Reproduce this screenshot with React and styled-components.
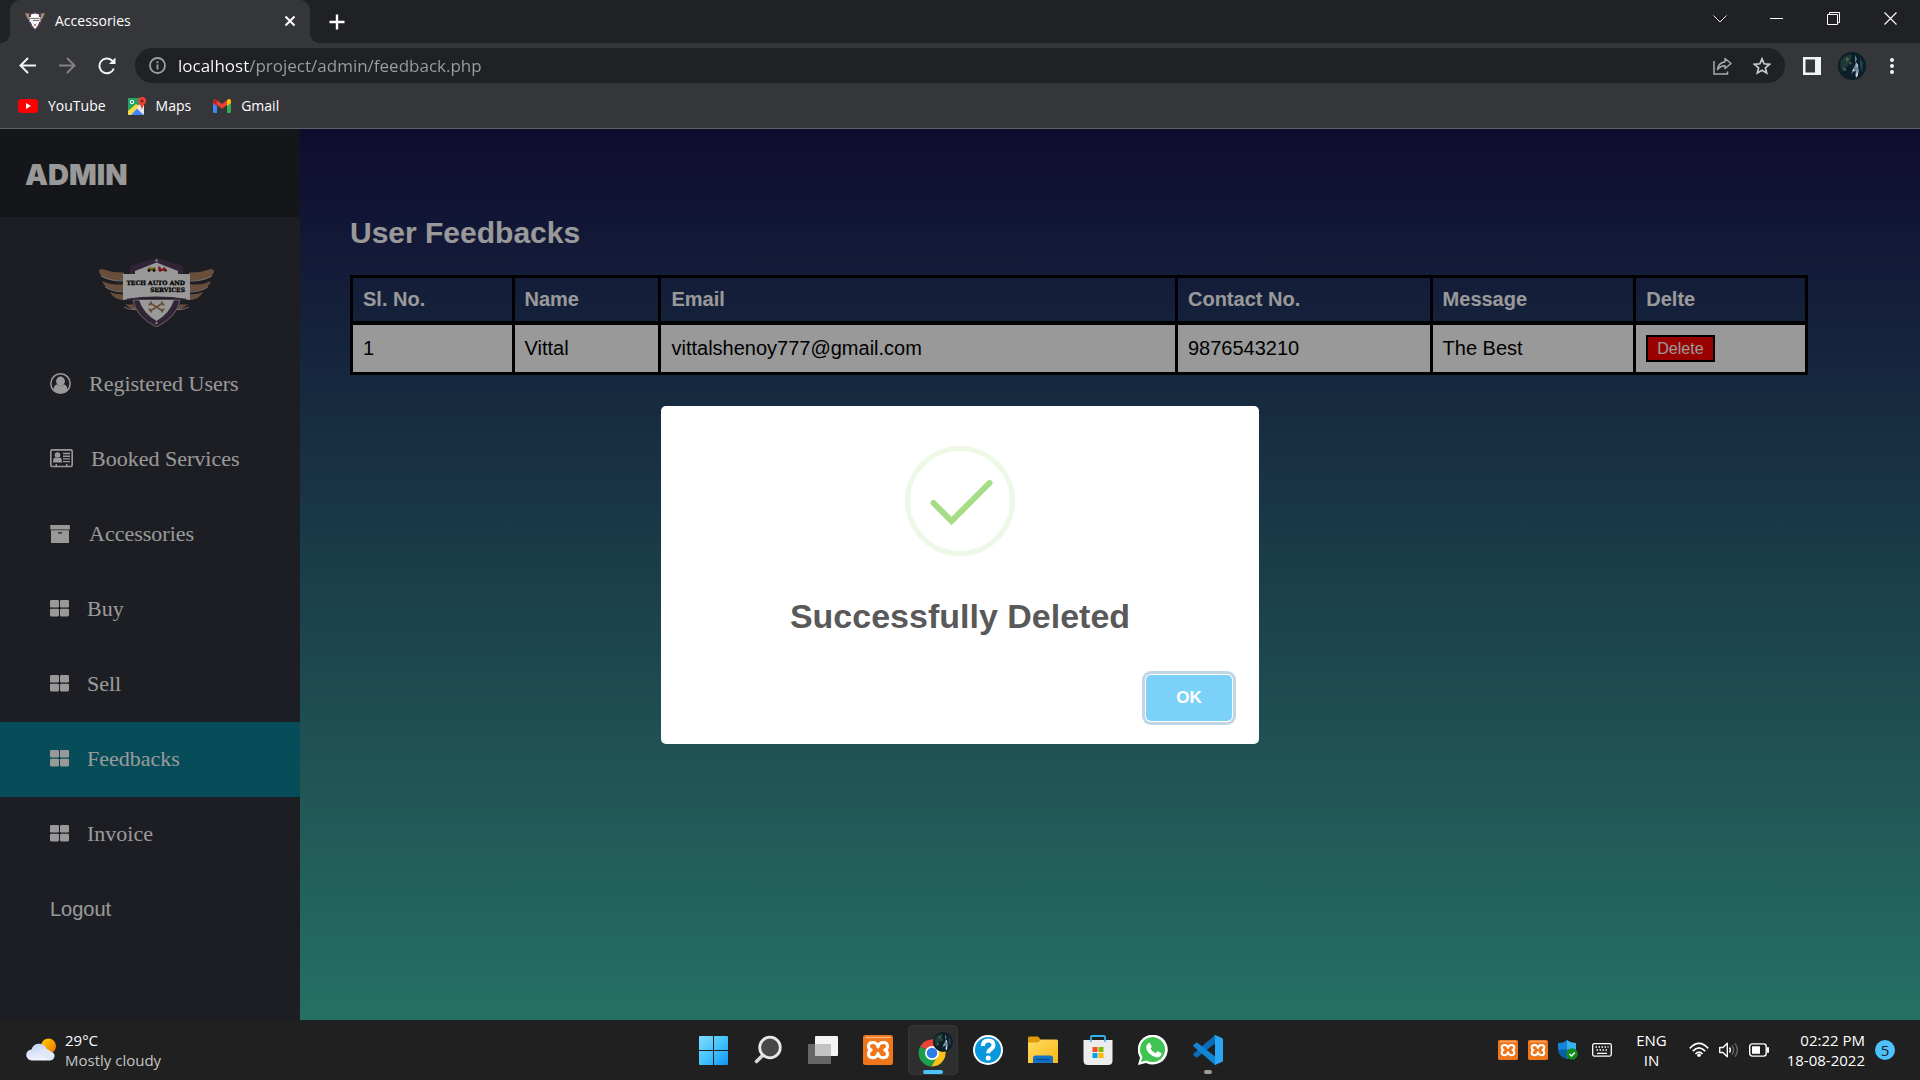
import React, { useState } from "react";
import styled, { createGlobalStyle } from "styled-components";

const GlobalStyle = createGlobalStyle`
  *, *::before, *::after { box-sizing: border-box; }
  body { margin: 0; background: #202020; }
  button { font: inherit; color: inherit; background: none; border: 0; padding: 0; cursor: pointer; }
  a { color: inherit; text-decoration: none; }
  ul { list-style: none; margin: 0; padding: 0; }
  svg { display: block; flex: none; }
`;

const uiFont = `"Segoe UI", "Open Sans", "Noto Sans", sans-serif`;
const pageFont = `"Liberation Sans", Arial, sans-serif`;

const Screen = styled.div`
  display: flex;
  flex-direction: column;
  min-height: 100vh;
`;

/* ---------- Browser ---------- */

const Browser = styled.header`
  background: #35363a;
  border-bottom: 1px solid #606165;
  color: #fff;
  font-family: ${uiFont};
  font-size: 14px;
  line-height: 20px;
`;

const TabStrip = styled.div`
  display: flex;
  align-items: stretch;
  height: 43px;
  padding-left: 10px;
  background: #202124;
`;

const Tab = styled.div`
  position: relative;
  display: flex;
  align-items: center;
  width: 300px;
  padding: 0 14px 2px 15px;
  border-radius: 10px 10px 0 0;
  background: #35363a;

  &::before,
  &::after {
    content: "";
    position: absolute;
    bottom: 0;
    width: 10px;
    height: 10px;
  }
  &::before {
    left: -10px;
    background: radial-gradient(circle at 0 0, #202124 10px, #35363a 10px);
  }
  &::after {
    right: -10px;
    background: radial-gradient(circle at 100% 0, #202124 10px, #35363a 10px);
  }
`;

const TabTitle = styled.span`
  flex: 1;
  margin-left: 10px;
`;

const NewTab = styled.button`
  display: grid;
  place-items: center;
  width: 34px;
  margin-left: 10px;
`;

const WindowControls = styled.div`
  display: flex;
  margin-left: auto;
  padding: 0 1px 6px 0;
`;

const WindowButton = styled.button`
  display: grid;
  place-items: center;
  width: 57px;
`;

const Toolbar = styled.div`
  display: flex;
  align-items: center;
  height: 44px;
  padding: 1px 8px 0 7px;
`;

const ToolButton = styled.button`
  display: grid;
  place-items: center;
  width: 40px;
  height: 34px;
`;

const AddressBar = styled.form`
  display: flex;
  flex: 1;
  align-items: center;
  height: 35px;
  margin: 0 7px 0 8px;
  padding: 0 3px 0 14px;
  border-radius: 18px;
  background: #202124;
`;

const AddressInput = styled.input`
  flex: 1;
  min-width: 0;
  margin-left: 12px;
  padding: 0;
  border: 0;
  outline: 0;
  color: #9aa0a6;
  background: linear-gradient(90deg, #ffffff 71px, #9aa0a6 71px);
  background-clip: text;
  -webkit-background-clip: text;
  -webkit-text-fill-color: transparent;
  font-family: ${uiFont};
  font-size: 17px;
  line-height: 24px;
`;

const Bookmarks = styled.nav`
  display: flex;
  align-items: center;
  gap: 22px;
  height: 41px;
  padding: 0 18px 3px;
`;

const Bookmark = styled.a`
  display: flex;
  align-items: center;
  gap: 10px;
`;

/* ---------- Site ---------- */

const Site = styled.div`
  position: relative;
  display: flex;
  flex: 1;
  font-family: ${pageFont};
  font-size: 20px;
  line-height: 23px;
  color: #fff;
  background: linear-gradient(#1b1451, #40bba6);
`;

const Sidebar = styled.aside`
  width: 300px;
  background: #30323b;
`;

const Brand = styled.div`
  display: flex;
  align-items: center;
  height: 88px;
  padding: 2px 25px 0;
  background: #23252a;
  font-family: "Arial Black", Inter, sans-serif;
  font-size: 29px;
  font-weight: 900;
`;

const LogoArea = styled.div`
  padding: 41px 0 20px 99px;
`;

const MenuLink = styled.a`
  display: flex;
  align-items: center;
  gap: 18px;
  height: 75px;
  padding: ${(p) => (p.$plain ? "0 50px" : "0 50px 2px")};
  background: ${(p) => (p.$active ? "#0b8095" : "transparent")};
  font-family: ${(p) => (p.$plain ? pageFont : `"Liberation Serif", "Times New Roman", serif`)};
  font-size: ${(p) => (p.$plain ? "20px" : "22px")};
`;

const Main = styled.main`
  flex: 1;
  padding-top: 87px;
`;

const Heading = styled.h1`
  margin: 0 50px 25px;
  font-size: 30px;
  line-height: 34px;
`;

const Table = styled.table`
  width: 90%;
  margin-left: 50px;
  table-layout: fixed;
  border-collapse: collapse;
  text-align: left;

  th,
  td {
    padding: 10px;
    border: 3px solid #000;
  }
  th {
    border-bottom-width: 4px;
  }
  td {
    background: #fff;
    color: #000;
  }
`;

const Column = styled.col`
  width: ${(p) => p.$share}%;
`;

const DeleteButton = styled.button`
  display: block;
  height: 27px;
  padding: 0 9px;
  border: 2px solid #000;
  background: #f00;
  color: #fff;
  font-size: 16px;
  line-height: 20px;
`;

/* ---------- Alert ---------- */

const Overlay = styled.div`
  position: absolute;
  inset: 0;
  display: grid;
  place-items: center;
  background: rgba(0, 0, 0, 0.4);
`;

const Alert = styled.section`
  display: flex;
  flex-direction: column;
  align-items: center;
  width: 598px;
  padding: 40px 27px 23px;
  border-radius: 5px;
  background: #fff;
`;

const AlertTitle = styled.h2`
  margin: 39px 0 38px;
  color: #595959;
  font-size: 34px;
  line-height: 42px;
`;

const AlertButton = styled.button`
  align-self: flex-end;
  width: 86px;
  height: 46px;
  border-radius: 5px;
  background: #7cd1f9;
  box-shadow: 0 0 0 1px #fff, 0 0 0 4px rgba(43, 114, 165, 0.29);
  color: #fff;
  font-size: 17px;
  font-weight: 700;
`;

/* ---------- Taskbar ---------- */

const Taskbar = styled.footer`
  display: grid;
  grid-template-columns: 1fr auto 1fr;
  align-items: center;
  height: 60px;
  padding: 0 25px 0 26px;
  background: #202020;
  color: #fff;
  font-family: ${uiFont};
  font-size: 15px;
  line-height: 20px;
`;

const Weather = styled.button`
  display: flex;
  align-items: center;
  justify-self: start;
  gap: 8px;
  text-align: left;
`;

const Lines = styled.span`
  display: flex;
  flex-direction: column;
  text-align: ${(p) => p.$align || "left"};
`;

const Muted = styled.span`
  color: #c4c4c4;
`;

const Apps = styled.div`
  display: flex;
  gap: 5px;
`;

const AppButton = styled.button`
  position: relative;
  display: grid;
  place-items: center;
  width: 50px;
  height: 50px;
  border-radius: 5px;
  background: ${(p) => (p.$current ? "#2e2e2e" : "transparent")};
  box-shadow: ${(p) => (p.$current ? "inset 0 0 0 1px #363636" : "none")};

  &::after {
    content: "";
    position: absolute;
    bottom: 1px;
    width: ${(p) => (p.$current ? "20px" : "8px")};
    height: 4px;
    border-radius: 2px;
    background: ${(p) => (p.$current ? "#4cc2ff" : p.$running ? "#9a9a9a" : "transparent")};
  }
`;

const Tray = styled.div`
  display: flex;
  align-items: center;
  justify-self: end;
  gap: 10px;
`;

const TrayGroup = styled.div`
  display: flex;
  align-items: center;
  gap: 10px;
  margin-left: ${(p) => p.$lead || "0"};
`;

const Badge = styled.span`
  display: grid;
  place-items: center;
  width: 20px;
  height: 20px;
  border-radius: 50%;
  background: #4cc2ff;
  color: #202020;
`;

/* ---------- Icons ---------- */

const Stroke = ({ w = 20, h = w, box, color = "#fff", width = 2, children, ...rest }) => (
  <svg width={w} height={h} viewBox={box || `0 0 ${w} ${h}`} fill="none" stroke={color} strokeWidth={width} {...rest}>
    {children}
  </svg>
);

const Favicon = () => (
  <svg width="20" height="20" viewBox="0 0 20 20">
    <path d="M0 2l6 1v6L4 9Q2 7 1.500 5.500zM20 2l-6 1v6l2 0q2-2 2.500-3.500z" fill="#b08a70" />
    <path d="M4 3l6-2 6 2v9q-2 5-6 7.500Q6 17 4 12z" fill="#54405c" />
    <path d="M6 3.500l4-1 4 1v8q-1 4-4 6.500-3-2.500-4-6.500z" fill="#fff" />
    <path d="M4.500 6h11v5h-11z" fill="#ececec" />
    <path d="M5.500 7.500h9M8 9.500h6.500" stroke="#777" />
    <path d="M8.500 12.500l3 3M11.500 12.500l-3 3" stroke="#b08a70" />
  </svg>
);

const Wing = () => (
  <g>
    <path d="M0 14Q0 11 3 11 14 15 25 14.500V22.500Q10 23 4 19 1 17 0 14z" />
    <path d="M3 23Q13 28 25 26V33.500Q12 33 7 29 4 26 3 23z" />
    <path d="M11 34Q18 37 25 36V42Q18 42 14 38 12 36 11 34z" />
    <path d="M26 46Q31 47 34 46L37 52Q31 51 26 46z" />
    <path d="M2 18Q12 23.500 25 23M6 29Q14 34 25 34M25 49Q30 52 37 51.500" fill="none" stroke="#e8ddd5" strokeWidth="0.8" />
  </g>
);

const Logo = () => (
  <svg width="115" height="69" viewBox="0 0 115 69" role="img" aria-label="Tech Auto and Services">
    <g fill="#ad8363">
      <Wing />
      <g transform="translate(115 0) scale(-1 1)"><Wing /></g>
    </g>
    <path d="M31 8L57.500 0 84 8v12H31z" fill="#503c5a" />
    <path d="M36 13L57.500 4.500 79 13v8H36z" fill="#fff" />
    <path d="M34 42h47q-3 17-23.500 27Q37 59 34 42z" fill="#503c5a" stroke="#cfc8d2" strokeWidth="0.8" />
    <path d="M40 42h35q-4 13-17.500 21Q44 55 40 42z" fill="#fff" />
    <circle cx="57.500" cy="2.500" r="1.200" fill="#d8d2da" />
    <circle cx="57.500" cy="65" r="1.200" fill="#d8d2da" />
    <path d="M48 13l2-4 3 1 3-1 1 4z" fill="#c9991c" />
    <circle cx="50" cy="12.500" r="1.400" fill="#222" />
    <circle cx="55" cy="12.500" r="1.400" fill="#222" />
    <path d="M59 8.500h2l1.500 2.500 3-2 3 4h-9z" fill="#d23b2e" />
    <circle cx="61" cy="12.500" r="1.200" fill="#922" />
    <circle cx="66.500" cy="12.500" r="1.200" fill="#922" />
    <path d="M24 16H91V42Q57.500 36 24 42z" fill="#fff" />
    <path d="M28 41.500Q57.500 37 87 41.500" fill="none" stroke="#503c5a" strokeWidth="1.500" />
    <g stroke="#ad8363" strokeWidth="2" fill="none">
      <path d="M52 45.500L63 52.500M63 45.500L52 52.500" />
      <path d="M49.500 46.500q3 .5 2.500-3M65.500 46.500q-3 .5-2.500-3M49.500 51.500q3-.5 2.500 3M65.500 51.500q-3-.5-2.500 3" />
    </g>
    <g fontFamily="'DejaVu Serif', serif" fontWeight="700" fontSize="6" textAnchor="end" fill="#000" stroke="#000" strokeWidth="0.3">
      <text x="86" y="27">TECH AUTO AND</text>
      <text x="86" y="34">SERVICES</text>
    </g>
  </svg>
);

const UserIcon = () => (
  <svg width="21" height="21" viewBox="0 0 21 21" fill="#fff">
    <circle cx="10.500" cy="10.500" r="9.700" fill="none" stroke="#fff" strokeWidth="1.500" />
    <ellipse cx="10.500" cy="8.300" rx="4.400" ry="4.700" />
    <path d="M3.500 17q.5-5.500 3.800-5.500 3.200 2.600 6.400 0 3.300 0 3.800 5.500-3 3.300-7 3.300T3.500 17z" />
  </svg>
);

const CardIcon = () => (
  <svg width="23" height="19" viewBox="0 0 23 19" fill="#fff">
    <rect x="0.800" y="0.900" width="21.400" height="16.600" rx="1.500" fill="none" stroke="#fff" strokeWidth="1.600" />
    <circle cx="7.500" cy="6" r="2.800" />
    <path d="M3 13.500q0-5 2.500-5 2 1.500 4 0 2.500 0 2.500 5z" />
    <path d="M13 4.500h7M13 7.200h7M13 9.900h7M13 12.600h7" stroke="#fff" strokeWidth="1.400" />
    <path d="M5.500 15h1.500v2H5.500zM16 15h1.500v2H16z" />
  </svg>
);

const ArchiveIcon = () => (
  <svg width="21" height="18" viewBox="0 0 21 18" fill="#fff">
    <rect x="0.300" width="19.600" height="4.500" rx="0.600" />
    <path fillRule="evenodd" d="M1 5.300h18V17.500q0 .5-.6.5H1.600Q1 18 1 17.500zM8 7.200v1.300h4.200V7.200z" />
  </svg>
);

const GridIcon = () => (
  <svg width="19" height="17" viewBox="0 0 19 17" fill="#fff">
    <rect width="9" height="7.600" rx="1.300" />
    <rect x="10" width="9" height="7.600" rx="1.300" />
    <rect y="8.800" width="9" height="7.600" rx="1.300" />
    <rect x="10" y="8.800" width="9" height="7.600" rx="1.300" />
  </svg>
);

const YouTubeIcon = () => (
  <svg width="20" height="14" viewBox="0 0 20 14">
    <rect width="20" height="14" rx="3.500" fill="#f00" />
    <path d="M8 4l5 3-5 3z" fill="#fff" />
  </svg>
);

const MapsIcon = () => (
  <svg width="18" height="18" viewBox="0 0 18 18">
    <rect y="1" width="16" height="17" rx="1.500" fill="#e8e8e8" />
    <path d="M0 14V2.500Q0 1 1.500 1H11L12 7 6 11z" fill="#1fa463" />
    <path d="M0 14L8 7l3 2-8.500 9H1.500Q0 18 0 16.500z" fill="#ffd83b" />
    <path d="M3 18l6-6.500 6.500 6.500z" fill="#4285f4" />
    <circle cx="4" cy="5" r="1.700" fill="none" stroke="#fff" strokeWidth="1.100" />
    <path d="M14 0a4 4 0 0 1 4 4c0 3-3.300 4-4 9-.7-5-4-6-4-9a4 4 0 0 1 4-4z" fill="#ea4335" />
    <circle cx="14" cy="4" r="1.400" fill="#7b1d15" />
  </svg>
);

const GmailIcon = () => (
  <svg width="18" height="14" viewBox="0 0 18 14">
    <path d="M0 3l4 3v8H1.200Q0 14 0 12.800z" fill="#4285f4" />
    <path d="M18 3l-4 3v8h2.800q1.200 0 1.200-1.200z" fill="#34a853" />
    <path d="M4 6V1.200L9 5l5-3.800V6L9 9.800z" fill="#ea4335" />
    <path d="M0 4V2Q0 0 1.800 0 2.400 0 4 1.200V7z" fill="#c5221f" />
    <path d="M18 4V2q0-2-1.800-2-.6 0-2.200 1.200V7z" fill="#fbbc04" />
  </svg>
);

const Avatar = ({ size }) => (
  <svg width={size} height={size} viewBox="0 0 28 28">
    <circle cx="14" cy="14" r="14" fill="#0c1e28" />
    <path d="M3 8q5-6 11-5l-3 9-6 8q-4-5-2-12z" fill="#1c3b38" />
    <path d="M8 5l4 2-4 3zM5 15l4 3-3 1zM11 9l3 2-2 2z" fill="#4d6049" />
    <path d="M17 3l2 4-2 4 3 3 1 5-2 6-2-1 1-5-3 1-2 3 2-6 2-4z" fill="#6e8598" />
    <path d="M18 10l2 3-1 3zM19 18l1 5-2 3zM14 19l2-2 0 2z" fill="#eef4fa" />
    <path d="M22 6l3 5-1 10-2-7z" fill="#1c4652" />
  </svg>
);

const WeatherIcon = () => (
  <svg width="31" height="24" viewBox="0 0 31 24">
    <defs>
      <linearGradient id="sun" x1="0" y1="0" x2="1" y2="1"><stop stopColor="#ffd000" /><stop offset="1" stopColor="#f07000" /></linearGradient>
      <linearGradient id="cloud" x1="0" y1="0" x2="0.300" y2="1"><stop stopColor="#bcd0f4" /><stop offset="1" stopColor="#eef3fc" /></linearGradient>
    </defs>
    <circle cx="22.500" cy="8" r="7.500" fill="url(#sun)" />
    <path d="M6 22.500a5.500 5.500 0 0 1-.5-11A8 8 0 0 1 20 9.500q1.500 1.500 1.500 3.500a5 5 0 0 1 2 9.500z" fill="url(#cloud)" />
    <path d="M13 15q4-5 8.500-3.500 2 .5 3 2 4.500 1 4 5-.8 4-5 4z" fill="#dfe8f8" />
  </svg>
);

const WindowsIcon = () => (
  <svg width="29" height="29" viewBox="0 0 29 29">
    <defs><linearGradient id="win" gradientUnits="userSpaceOnUse" x1="0" y1="0" x2="29" y2="29"><stop stopColor="#7fdcff" /><stop offset="0.500" stopColor="#45c4fb" /><stop offset="1" stopColor="#0f93f5" /></linearGradient></defs>
    <path d="M1 0h13v14H0V1q0-1 1-1zM15 0h13q1 0 1 1v13H15zM0 15h14v14H1q-1 0-1-1zM15 15h14v13q0 1-1 1H15z" fill="url(#win)" />
  </svg>
);

const SearchIcon = () => (
  <svg width="30" height="30" viewBox="0 0 30 30">
    <path d="M3.500 26.500l7-7" stroke="#d5d9dc" strokeWidth="3.500" strokeLinecap="round" />
    <circle cx="17" cy="12.500" r="10.300" fill="#484848" stroke="#e6e9eb" strokeWidth="2.800" />
  </svg>
);

const TaskViewIcon = () => (
  <svg width="30" height="28" viewBox="0 0 30 28">
    <rect x="7" width="23" height="20" rx="1" fill="#f4f4f4" />
    <rect y="8" width="23" height="20" rx="1" fill="#666" />
    <path d="M7 8h16v12H7z" fill="#c3c3c3" />
  </svg>
);

const XamppIcon = ({ size }) => (
  <svg width={size} height={size} viewBox="0 0 30 30">
    <rect width="30" height="30" rx="2.500" fill="#f0761c" />
    <path d="M3 2.500h24" stroke="#f8b27c" strokeWidth="1.500" strokeLinecap="round" />
    <path
      d="M15 12Q14 7.500 10 7.500 5.500 7.500 5.500 11.300 5.500 14 8.200 15 5.500 16 5.500 19 5.500 22.700 10 22.700 14 22.700 15 18.500 16 22.700 20 22.700 24.500 22.700 24.500 19 24.500 16 21.800 15 24.500 14 24.500 11.300 24.500 7.500 20 7.500 16 7.500 15 12z"
      fill="none"
      stroke="#fff"
      strokeWidth="3"
      strokeLinejoin="round"
    />
  </svg>
);

const ChromeIcon = () => (
  <svg width="40" height="38" viewBox="0 0 40 38">
    <path d="M19 22L7.300 15.300A13.500 13.500 0 0 1 30.700 15.300z" fill="#ea4335" />
    <path d="M19 22L7.300 15.300A13.500 13.500 0 0 0 18.500 35.500L25 25z" fill="#1e9e4a" />
    <path d="M19 22L30.700 15.300A13.500 13.500 0 0 1 18.500 35.500L24.500 25z" fill="#fcc21b" />
    <path d="M19 8.500A13.500 13.500 0 0 1 30.700 15.300H19z" fill="#ea4335" />
    <circle cx="19" cy="22" r="7" fill="#fff" />
    <circle cx="19" cy="22" r="5.300" fill="#2f7de9" />
    <g transform="translate(20 1) scale(0.714)"><Avatar size={28} /></g>
  </svg>
);

const HelpIcon = () => (
  <svg width="30" height="30" viewBox="0 0 30 30">
    <circle cx="15" cy="15" r="14" fill="#0797dc" stroke="#fff" strokeWidth="2" />
    <path d="M10 11q0-5.500 5.200-5.500T20.500 10q0 2.500-2.700 4.200-2.600 1.600-2.600 4" fill="none" stroke="#fff" strokeWidth="4" />
    <circle cx="15.200" cy="23" r="2.500" fill="#fff" />
  </svg>
);

const FolderIcon = () => (
  <svg width="30" height="28" viewBox="0 0 30 28">
    <defs><linearGradient id="folder" x1="0" y1="0" x2="1" y2="1"><stop stopColor="#ffdb63" /><stop offset="1" stopColor="#f9b816" /></linearGradient></defs>
    <path d="M0 2q0-1.500 1.500-1.500H10l3 3.500v8H0z" fill="#dd9b0b" />
    <path d="M0 6.500h10l3-3h15.500Q30 3.500 30 5v22H0z" fill="url(#folder)" />
    <path d="M5 27v-5q0-2.500 2.500-2.500h15q2.500 0 2.500 2.500v5z" fill="#1272c6" />
    <path d="M9 23.500h12" stroke="#0a4f93" strokeWidth="1.500" strokeLinecap="round" />
  </svg>
);

const StoreIcon = () => (
  <svg width="30" height="30" viewBox="0 0 30 30">
    <path d="M8 7V2q0-1 1-1h12q1 0 1 1v5" fill="none" stroke="#2cb3ee" strokeWidth="1.800" />
    <path d="M.5 5h29v20.500q0 4.500-4.500 4.500H5Q.5 30 .5 25.500z" fill="#ececec" />
    <path d="M9.500 12h5v5h-5z" fill="#f25022" /><path d="M15.500 12h5v5h-5z" fill="#7fba00" />
    <path d="M9.500 18h5v5h-5z" fill="#00a4ef" /><path d="M15.500 18h5v5h-5z" fill="#ffb900" />
    <path d="M8 5v2M22 5v2" stroke="#2cb3ee" strokeWidth="1.500" />
  </svg>
);

const WhatsAppIcon = () => (
  <svg width="30" height="30" viewBox="0 0 30 30">
    <path d="M0 30l2-7.500A15 15 0 1 1 8 28z" fill="#fff" />
    <path d="M3 27l1.500-5A12.500 12.500 0 1 1 8.500 25.500z" fill="#3fc351" />
    <path d="M10.500 8q.8-.5 1.500 0l1.700 3.400q.2.800-1.200 2.300 1.800 3.200 5 4.500l1.700-1.800q.5-.4 1.200 0l2.700 1.500q.5.400.2 1.500-1 3-4.500 3-4-.4-8-4.500-3-3.500-2.600-6 .3-2.500 2.300-3.900z" fill="#fff" />
  </svg>
);

const CodeIcon = () => (
  <svg width="30" height="30" viewBox="0 0 30 30">
    <path d="M22 0v8.500L4.500 22.300q-.8.500-1.500 0L.6 20.200q-.9-.9 0-1.700z" fill="#0b6cb5" />
    <path d="M.6 11.500q-.9-.9 0-1.700L3 7.700q.7-.5 1.500 0L22 21.500V30z" fill="#1285d4" />
    <path d="M21 .5q.6-.7 1.500-.3L29 3q1 .5 1 1.500v21q0 1-1 1.500l-6.500 2.800q-.9.400-1.500-.3 1 .5 1-1V1.500q0-1.500-1-1z" fill="#2aa5f5" />
  </svg>
);

const ShieldIcon = () => (
  <svg width="20" height="20" viewBox="0 0 20 20">
    <path d="M9 0Q12 3 18 3v6q0 7-9 10Q0 16 0 9V3q6 0 9-3z" fill="#1683d8" />
    <path d="M9 0Q12 3 18 3v6.500H9z" fill="#39b1ee" />
    <path d="M0 9.500h9V19Q1 16.500 0 9.500z" fill="#0b5fa8" />
    <circle cx="14" cy="14" r="5.800" fill="#128a1e" />
    <path d="M11.500 14l2 2 3.300-3.500" fill="none" stroke="#fff" strokeWidth="1.300" />
  </svg>
);

const KeyboardIcon = () => (
  <Stroke w={20} h={14} width={1.3}>
    <rect x="0.700" y="0.700" width="18.600" height="12.400" rx="1.500" />
    <path d="M3.500 4h1.500M6.500 4H8M9.500 4H11M12.500 4H14M15.500 4h1M4.500 7H6M7.500 7H9M10.500 7H12M13.500 7H15M5 10.300h10" />
  </Stroke>
);

const WifiIcon = () => (
  <Stroke w={20} h={16} width={1.7}>
    <path d="M.8 6.300Q10-3.500 19.200 6.300M3.800 9.200q6.200-6.500 12.400 0M6.500 12q3.500-3.600 7 0" />
    <circle cx="10" cy="13.300" r="1.800" fill="#fff" stroke="none" />
  </Stroke>
);

const SpeakerIcon = () => (
  <Stroke w={20} h={16} width={1.4}>
    <path d="M.7 5.500H4L8.300 1.300v13.400L4 10.500H.7z" strokeLinejoin="round" />
    <path d="M10.500 5.500q1.800 2.500 0 5" />
    <path d="M13 3.300q3.300 4.700 0 9.400M16 1.300q4.700 6.700 0 13.400" stroke="#666" />
  </Stroke>
);

const BatteryIcon = () => (
  <Stroke w={20} h={14} width={1.4}>
    <rect x="0.700" y="0.900" width="16.500" height="12.200" rx="2.500" />
    <rect x="3" y="3.200" width="8" height="7.600" rx="0.500" fill="#fff" stroke="none" />
    <path d="M19 5v4" strokeWidth="2" strokeLinecap="round" />
  </Stroke>
);

/* ---------- Data ---------- */

const menu = [
  { label: "Registered Users", Icon: UserIcon },
  { label: "Booked Services", Icon: CardIcon },
  { label: "Accessories", Icon: ArchiveIcon },
  { label: "Buy", Icon: GridIcon },
  { label: "Sell", Icon: GridIcon },
  { label: "Feedbacks", Icon: GridIcon, active: true },
  { label: "Invoice", Icon: GridIcon },
  { label: "Logout", plain: true },
];

const columns = [
  { title: "Sl. No.", share: 11.1 },
  { title: "Name", share: 10.1 },
  { title: "Email", share: 35.5 },
  { title: "Contact No.", share: 17.5 },
  { title: "Message", share: 14 },
  { title: "Delte", share: 11.8 },
];

const feedbacks = [
  { id: 1, name: "Vittal", email: "vittalshenoy777@gmail.com", contact: "9876543210", message: "The Best" },
];

const bookmarks = [
  { label: "YouTube", Icon: YouTubeIcon },
  { label: "Maps", Icon: MapsIcon },
  { label: "Gmail", Icon: GmailIcon },
];

const apps = [
  { label: "Start", icon: <WindowsIcon /> },
  { label: "Search", icon: <SearchIcon /> },
  { label: "Task view", icon: <TaskViewIcon /> },
  { label: "XAMPP", icon: <XamppIcon size={30} /> },
  { label: "Chrome", icon: <ChromeIcon />, current: true },
  { label: "Help", icon: <HelpIcon /> },
  { label: "File Explorer", icon: <FolderIcon /> },
  { label: "Store", icon: <StoreIcon /> },
  { label: "WhatsApp", icon: <WhatsAppIcon /> },
  { label: "Code", icon: <CodeIcon />, running: true },
];

/* ---------- Sections ---------- */

function BrowserChrome() {
  const [url, setUrl] = useState("localhost/project/admin/feedback.php");
  return (
    <Browser>
      <TabStrip>
        <Tab>
          <Favicon />
          <TabTitle>Accessories</TabTitle>
          <button aria-label="Close tab">
            <Stroke w={12} width={2}><path d="M1.500 1.500l9 9M10.500 1.500l-9 9" /></Stroke>
          </button>
        </Tab>
        <NewTab aria-label="New tab">
          <Stroke w={16} width={2.4}><path d="M8 .5v15M.5 8h15" /></Stroke>
        </NewTab>
        <WindowControls>
          <WindowButton aria-label="Search tabs">
            <Stroke w={14} h={8} width={0.9}><path d="M.5.5L7 7l6.500-6.500" /></Stroke>
          </WindowButton>
          <WindowButton aria-label="Minimize">
            <Stroke w={13} h={1} width={1}><path d="M0 .5h13" /></Stroke>
          </WindowButton>
          <WindowButton aria-label="Restore">
            <Stroke w={13} width={1}><path d="M.5 2.500h10v10H.5zM2.500 2.500v-2h10v10h-2" /></Stroke>
          </WindowButton>
          <WindowButton aria-label="Close">
            <Stroke w={13} width={1.1}><path d="M.5.5l12 12M12.500.5l-12 12" /></Stroke>
          </WindowButton>
        </WindowControls>
      </TabStrip>
      <Toolbar>
        <ToolButton type="button" aria-label="Back">
          <Stroke w={17} color="#f1f3f4"><path d="M17 8.500H2M9 1L1.500 8.500 9 16" /></Stroke>
        </ToolButton>
        <ToolButton type="button" aria-label="Forward">
          <Stroke w={17} color="#808184"><path d="M0 8.500h15M8 1l7.500 7.500L8 16" /></Stroke>
        </ToolButton>
        <ToolButton type="button" aria-label="Reload">
          <Stroke w={18} color="#f1f3f4" width={2}>
            <path d="M15.800 11.500A7.400 7.400 0 1 1 14 3.500l1 1" />
            <path d="M17.500 0.500v6.500H11z" fill="#f1f3f4" stroke="none" />
          </Stroke>
        </ToolButton>
        <AddressBar onSubmit={(e) => e.preventDefault()}>
          <Stroke w={17} color="#9aa0a6" width={1.8}>
            <circle cx="8.500" cy="8.500" r="7.500" />
            <path d="M8.500 7.500v5M8.500 4.300v1.900" />
          </Stroke>
          <AddressInput aria-label="Address" value={url} onChange={(e) => setUrl(e.target.value)} />
          <ToolButton type="button" aria-label="Share">
            <Stroke w={19} h={18} color="#a9abae" width={1.5}>
              <path d="M1 4v13h13.500v-2.500" />
              <path d="M12 1.500l6 5-6 5V8.700Q7.500 8.500 4.500 12.500 5 6 12 4.700z" strokeLinejoin="round" />
            </Stroke>
          </ToolButton>
          <ToolButton type="button" aria-label="Bookmark">
            <Stroke w={18} color="#c6c8ca" width={1.7}>
              <path d="M9 1.800l2.100 5 5.400.5-4.100 3.500 1.300 5.300L9 13.300l-4.700 2.800 1.300-5.300L1.500 7.300l5.400-.5z" />
            </Stroke>
          </ToolButton>
        </AddressBar>
        <ToolButton type="button" aria-label="Side panel">
          <svg width="18" height="18" viewBox="0 0 18 18"><path fillRule="evenodd" d="M0 0h18v18H0zM2.500 2.500v13H12v-13z" fill="#f1f3f4" /></svg>
        </ToolButton>
        <ToolButton type="button" aria-label="Profile"><Avatar size={28} /></ToolButton>
        <ToolButton type="button" aria-label="Menu">
          <svg width="4" height="16" viewBox="0 0 4 16" fill="#f1f3f4"><circle cx="2" cy="2" r="2" /><circle cx="2" cy="8" r="2" /><circle cx="2" cy="14" r="2" /></svg>
        </ToolButton>
      </Toolbar>
      <Bookmarks aria-label="Bookmarks">
        {bookmarks.map(({ label, Icon }) => (
          <Bookmark key={label} href="#"><Icon />{label}</Bookmark>
        ))}
      </Bookmarks>
    </Browser>
  );
}

function AdminSite() {
  return (
    <Site>
      <Sidebar>
        <Brand>ADMIN</Brand>
        <LogoArea><Logo /></LogoArea>
        <nav>
          <ul>
            {menu.map(({ label, Icon, active, plain }) => (
              <li key={label}>
                <MenuLink href="#" $active={active} $plain={plain} aria-current={active ? "page" : undefined}>
                  {Icon && <Icon />}
                  {label}
                </MenuLink>
              </li>
            ))}
          </ul>
        </nav>
      </Sidebar>
      <Main>
        <Heading>User Feedbacks</Heading>
        <Table>
          <colgroup>
            {columns.map((c) => <Column key={c.title} $share={c.share} />)}
          </colgroup>
          <thead>
            <tr>{columns.map((c) => <th key={c.title} scope="col">{c.title}</th>)}</tr>
          </thead>
          <tbody>
            {feedbacks.map((f) => (
              <tr key={f.id}>
                <td>{f.id}</td>
                <td>{f.name}</td>
                <td>{f.email}</td>
                <td>{f.contact}</td>
                <td>{f.message}</td>
                <td><DeleteButton>Delete</DeleteButton></td>
              </tr>
            ))}
          </tbody>
        </Table>
      </Main>
      <Overlay>
        <Alert role="alertdialog" aria-labelledby="alert-title">
          <svg width="110" height="110" viewBox="0 0 110 110" fill="none">
            <circle cx="55" cy="55" r="52.500" stroke="#edf8e7" strokeWidth="5" />
            <path d="M28.500 57L46.500 75 84.500 37" stroke="#a5dc86" strokeWidth="6" strokeLinecap="round" />
          </svg>
          <AlertTitle id="alert-title">Successfully Deleted</AlertTitle>
          <AlertButton>OK</AlertButton>
        </Alert>
      </Overlay>
    </Site>
  );
}

function SystemTaskbar() {
  return (
    <Taskbar>
      <Weather>
        <WeatherIcon />
        <Lines>
          <span>29°C</span>
          <Muted>Mostly cloudy</Muted>
        </Lines>
      </Weather>
      <Apps>
        {apps.map((a) => (
          <AppButton key={a.label} aria-label={a.label} $current={a.current} $running={a.running}>{a.icon}</AppButton>
        ))}
      </Apps>
      <Tray>
        <TrayGroup>
          <XamppIcon size={20} />
          <XamppIcon size={20} />
          <ShieldIcon />
        </TrayGroup>
        <TrayGroup $lead="4px"><KeyboardIcon /></TrayGroup>
        <TrayGroup $lead="14px">
          <Lines $align="center"><span>ENG</span><span>IN</span></Lines>
        </TrayGroup>
        <TrayGroup $lead="12px">
          <WifiIcon />
          <SpeakerIcon />
          <BatteryIcon />
        </TrayGroup>
        <TrayGroup $lead="8px">
          <Lines $align="right"><span>02:22 PM</span><span>18-08-2022</span></Lines>
          <Badge>5</Badge>
        </TrayGroup>
      </Tray>
    </Taskbar>
  );
}

export default function App() {
  return (
    <Screen>
      <GlobalStyle />
      <BrowserChrome />
      <AdminSite />
      <SystemTaskbar />
    </Screen>
  );
}
